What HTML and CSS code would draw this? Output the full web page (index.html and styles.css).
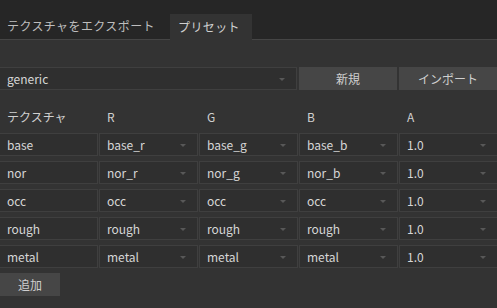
FILE: index.html
```html
<html>
<head>
    <title>プリセット</title>
    <meta http-equiv="Content-Type" content="text/html; charset=UTF-8"/>
    <link rel="stylesheet" href="styles.css">
</head>
<body>
<div class="tabs">
    <div class="tab">テクスチャをエクスポート</div>
    <div class="tab active">プリセット</div>
</div>
<div class="content">
    <div class="toolbar">
        <div class="field select preset">generic</div>
        <div class="btn">新規</div>
        <div class="btn">インポート</div>
    </div>
    <div class="grid">
        <div class="head">テクスチャ</div>
        <div class="head">R</div>
        <div class="head">G</div>
        <div class="head">B</div>
        <div class="head">A</div>

        <div class="field">base</div>
        <div class="field select">base_r</div>
        <div class="field select">base_g</div>
        <div class="field select">base_b</div>
        <div class="field select">1.0</div>

        <div class="field">nor</div>
        <div class="field select">nor_r</div>
        <div class="field select">nor_g</div>
        <div class="field select">nor_b</div>
        <div class="field select">1.0</div>

        <div class="field">occ</div>
        <div class="field select">occ</div>
        <div class="field select">occ</div>
        <div class="field select">occ</div>
        <div class="field select">1.0</div>

        <div class="field">rough</div>
        <div class="field select">rough</div>
        <div class="field select">rough</div>
        <div class="field select">rough</div>
        <div class="field select">1.0</div>

        <div class="field">metal</div>
        <div class="field select">metal</div>
        <div class="field select">metal</div>
        <div class="field select">metal</div>
        <div class="field select">1.0</div>
    </div>
    <div class="btn add">追加</div>
</div>
</body>
</html>
```
FILE: styles.css
```css
html, body {
    margin: 0px;
    background: #333333;
    color: #d6d6d6;
    font-family: "Noto Sans CJK JP", "Noto Sans", sans-serif;
    font-size: 12px;
    overflow: hidden;
}

* {
    box-sizing: border-box;
}

/* tabs */
.tabs {
    display: flex;
    align-items: flex-end;
    height: 40px;
    background: #262626;
    border-bottom: 1px solid #454545;
}

.tab {
    width: 170px;
    height: 26px;
    line-height: 25px;
    padding-left: 7px;
    letter-spacing: 0.4px;
    color: #bdbdbd;
}

.tab.active {
    width: 82px;
    margin-bottom: -1px;
    background: #333333;
    padding-left: 8px;
    color: #d0d0d0;
}

/* content */
.content {
    padding-top: 27px;
}

.toolbar {
    display: flex;
    gap: 2px;
    margin-left: -1px;
}

.field {
    position: relative;
    height: 23px;
    line-height: 21px;
    padding: 0 7px;
    background: #2f2f2f;
    border: 1px solid #3f3f3f;
    white-space: nowrap;
}

/* маленькая стрелка у выпадающих списков */
.select:after {
    content: '';
    position: absolute;
    right: 11px;
    top: 10px;
    border-left: 3px solid transparent;
    border-right: 3px solid transparent;
    border-top: 3px solid #585858;
}

.preset {
    width: 300px;
}

.btn {
    width: 98px;
    height: 23px;
    line-height: 23px;
    text-align: center;
    background: #464646;
    color: #cfcfcf;
    flex-shrink: 0;
}

.grid {
    display: grid;
    grid-template-columns: repeat(5, 99px);
    column-gap: 1px;
    row-gap: 5px;
    margin: 19px 0 0 -1px;
}

.head {
    height: 16px;
    line-height: 16px;
    padding-left: 8px;
    margin-bottom: 3px;
    color: #d0d0d0;
}

.add {
    width: 60px;
    margin-top: 5px;
}
```
